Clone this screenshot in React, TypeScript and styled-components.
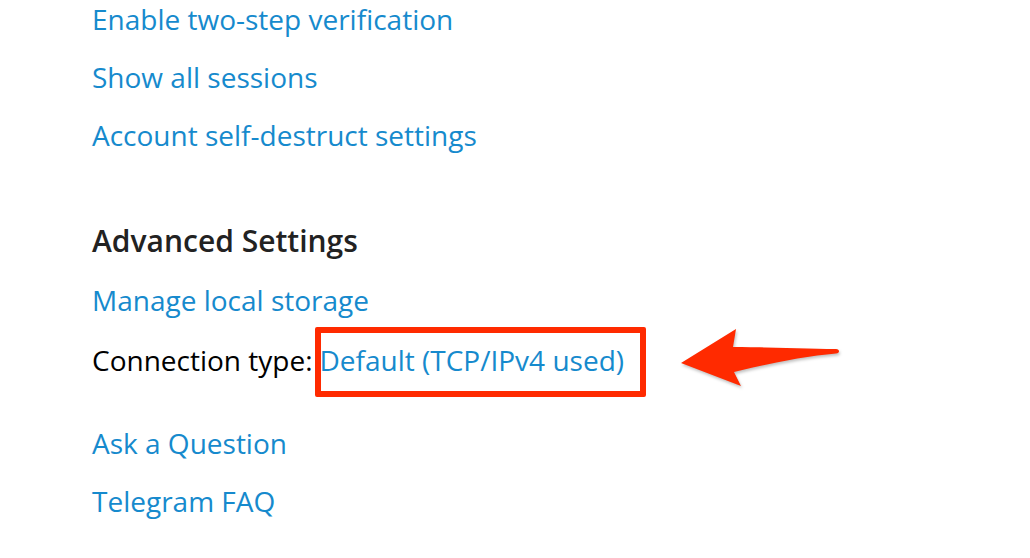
import React from "react";
import styled, { createGlobalStyle } from "styled-components";

const Global = createGlobalStyle`
  html, body { margin: 0; padding: 0; background: #ffffff; }
  body { font-family: "Open Sans", "Noto Sans", sans-serif; overflow: hidden; }
`;

const Page = styled.div`
  width: 1030px;
  height: 558px;
  overflow: hidden;
  background: #fff;
`;

const Column = styled.div`
  display: flex;
  flex-direction: column;
  padding-left: 92px;
  margin-top: -10px;
`;

const Section = styled.div<{ $gap?: number }>`
  display: flex;
  flex-direction: column;
  margin-top: ${(p) => p.$gap ?? 0}px;
`;

const Link = styled.a<{ $shift?: number }>`
  font-size: 28px;
  line-height: 58px;
  color: #168acd;
  text-decoration: none;
  white-space: nowrap;
  cursor: pointer;
  margin-top: ${(p) => p.$shift ?? 0}px;
`;

const Heading = styled.div`
  font-size: 30px;
  line-height: 58px;
  font-weight: 600;
  color: #222222;
`;

const Row = styled.div<{ $shift?: number }>`
  font-size: 28px;
  line-height: 58px;
  color: #000;
  white-space: nowrap;
  display: flex;
  align-items: baseline;
  margin-top: ${(p) => p.$shift ?? 0}px;
`;

const Label = styled.span`
  margin-right: 7px;
`;

const Highlighted = styled.span`
  position: relative;
  display: inline-block;
`;

const Box = styled.span`
  position: absolute;
  left: -5px;
  right: -22px;
  top: -4px;
  bottom: -8px;
  border: 6px solid #ff2a00;
  border-radius: 2px;
  pointer-events: none;
`;

const Arrow = styled.svg`
  position: absolute;
  left: calc(100% + 52px);
  top: -6px;
  width: 170px;
  height: 70px;
  overflow: visible;
  filter: drop-shadow(1px 2px 1.5px rgba(0, 0, 0, 0.25));
`;

export default function App() {
  return (
    <Page>
      <Global />
      <Column>
        <Section>
          <Link>Enable two-step verification</Link>
          <Link>Show all sessions</Link>
          <Link>Account self-destruct settings</Link>
        </Section>
        <Section $gap={48}>
          <Heading>Advanced Settings</Heading>
          <Link $shift={1}>Manage local storage</Link>
          <Row $shift={2}>
            <Label>Connection type:</Label>
            <Highlighted>
              <Link>Default (TCP/IPv4 used)</Link>
              <Box />
              <Arrow viewBox="0 0 170 70">
                <path
                  d="M5 38 L60 4 L57 22 C 90 22, 130 24, 160 24 C 164 24, 164 28.5, 160 28.5 C 130 31, 95 38, 58 47 L65 61 Z"
                  fill="#ff2a00"
                />
              </Arrow>
            </Highlighted>
          </Row>
        </Section>
        <Section $gap={25}>
          <Link>Ask a Question</Link>
          <Link>Telegram FAQ</Link>
        </Section>
      </Column>
    </Page>
  );
}
